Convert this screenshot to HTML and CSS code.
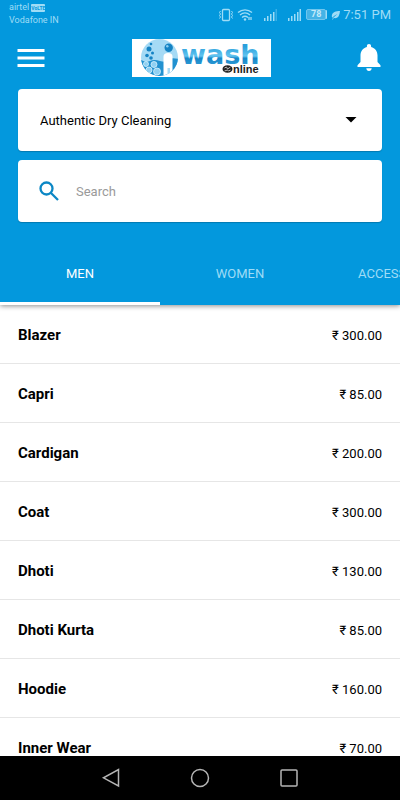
FILE: index.html
```html
<!DOCTYPE html>
<html lang="en">
<head>
<meta charset="utf-8">
<meta name="viewport" content="width=device-width, initial-scale=1">
<title>iWash Online</title>
<link rel="stylesheet" href="styles.css">
</head>
<body>
<div class="app">
  <header class="top">
    <div class="status">
      <div class="carriers">
        <div class="carrier">airtel <span class="volte">VoLTE</span></div>
        <div class="carrier">Vodafone IN</div>
      </div>
      <div class="indicators">
        <svg width="16" height="14" viewBox="0 0 16 14" fill="none" stroke="currentColor" aria-hidden="true">
          <rect x="4.5" y="1.5" width="7" height="11" rx="1" stroke-width="1.3"/>
          <path d="M2.500 3l-1 1.500 1 1.500-1 1.500 1 1.500-1 1.500M13.500 3l1 1.500-1 1.500 1 1.500-1 1.500 1 1.500"/>
        </svg>
        <svg class="wifi" width="16" height="14" viewBox="0 0 16 14" fill="none" stroke="currentColor" stroke-width="1.3" aria-hidden="true">
          <path d="M1 4.500c4-3.600 10-3.600 14 0M3 7c3-2.600 7-2.600 10 0M5 9.400c2-1.500 4-1.500 6 0"/>
          <circle cx="8" cy="11.500" r="1.200" fill="currentColor" stroke="none"/>
          <path d="M12 12V9M14 9v3"/>
        </svg>
        <svg class="signal" width="14" height="14" viewBox="0 0 14 14" fill="currentColor" aria-hidden="true">
          <path d="M1 10h1.500v3H1zM4 8h1.500v5H4zM7 6h1.500v7H7zM10 4h1.500v9H10z"/>
          <path d="M12.500 1H14v12h-1.500z" opacity=".35"/>
        </svg>
        <svg class="signal" width="14" height="14" viewBox="0 0 14 14" fill="currentColor" aria-hidden="true">
          <path d="M1 10h1.500v3H1zM4 8h1.500v5H4zM7 6h1.500v7H7zM10 4h1.500v9H10zM12.500 1H14v12h-1.500z"/>
        </svg>
        <span class="battery">78</span>
        <svg class="leaf" width="9" height="10" viewBox="0 0 9 10" fill="currentColor" aria-hidden="true">
          <path d="M9 1C5 1 1 2 .8 6c0 .7.200 1.200.5 1.700C3 6 4.500 5 6.500 4 4.500 5.600 2.500 7 1 9.500h.8l1-1.400C7.500 9 8.500 5 9 1z"/>
        </svg>
        <time class="clock">7:51 PM</time>
      </div>
    </div>

    <div class="bar">
      <button class="icon-button" type="button" aria-label="Menu">
        <svg width="28" height="18" viewBox="0 0 28 18" fill="#fff"><path d="M.5 0h27v3H.5zM.5 7.500h27v3H.5zM.5 15h27v3H.5z"/></svg>
      </button>
      <svg class="logo" width="139" height="38" viewBox="0 0 139 38" role="img" aria-label="iWash Online">
        <defs>
          <linearGradient id="ink" x1="0" y1="0" x2="0" y2="1">
            <stop offset=".25" stop-color="#2ba0dc"/><stop offset=".55" stop-color="#62c4f0"/>
            <stop offset=".62" stop-color="#1787c8"/><stop offset="1" stop-color="#3aa6de"/>
          </linearGradient>
          <clipPath id="disc"><circle cx="27.500" cy="18.500" r="18.500"/></clipPath>
        </defs>
        <rect width="139" height="38" fill="#fff"/>
        <g clip-path="url(#disc)">
          <rect x="9" width="38" height="38" fill="#a5daf5"/>
          <path d="M9 21q5 3 9 1t10 0 8-1 11-1v18H9z" fill="#2191d0"/>
          <g fill="#8fd0f2" stroke="#d8f1fc" stroke-width=".8">
            <circle cx="14" cy="25" r="2.500"/><circle cx="22" cy="25.500" r="3"/><circle cx="17" cy="31" r="3"/><circle cx="25" cy="32.500" r="3.500"/>
          </g>
          <path d="M31.500 38V17.500q0-3.500 4.500-3.500t4.500 3.500V38z" fill="#fff"/>
          <path d="M35.500 29h2.500v9h-2.500z" fill="#a5daf5"/>
        </g>
        <g fill="#1583c4">
          <circle cx="36.700" cy="8.700" r="4.200"/><circle cx="17" cy="10" r="2.500"/><circle cx="15" cy="16.500" r="1.800"/>
          <circle cx="19" cy="5" r="1.300"/><circle cx="20.500" cy="14" r="1.500"/><circle cx="19" cy="19" r="1.800"/>
        </g>
        <circle cx="35.300" cy="7.300" r="1.200" fill="#8fd0f2"/>
        <text class="logo-wash" x="49" y="25" fill="url(#ink)">wash</text>
        <ellipse cx="95.500" cy="30" rx="5" ry="3.800" fill="#222"/>
        <path d="M92.500 29l2-1 1 2 3-2M92.500 32l3-1 1 1 2-1" stroke="#bbb" fill="none"/>
        <text class="logo-online" x="101" y="34" fill="#222">nline</text>
      </svg>
      <button class="icon-button" type="button" aria-label="Notifications">
        <svg width="24" height="28" viewBox="0 0 24 28" fill="#fff"><path d="M12 0c1.300 0 2.100.9 2.100 2.200v.7c4 1 6.400 4.300 6.400 8.400V18l3 3.200V23H.5v-1.800l3-3.200v-6.700c0-4.100 2.400-7.400 6.400-8.400v-.7C9.900.9 10.700 0 12 0zM9.300 24.200h5.400c0 1.500-1.200 2.700-2.700 2.700s-2.700-1.200-2.700-2.700z"/></svg>
      </button>
    </div>

    <div class="filters">
      <div class="field">
        <select class="service" aria-label="Service">
          <option>Authentic Dry Cleaning</option>
        </select>
        <svg class="caret" width="12" height="6" viewBox="0 0 12 6" aria-hidden="true"><path d="M.5 0h11L6 5.500z"/></svg>
      </div>
      <label class="field">
        <svg class="lens" width="20" height="20" viewBox="0 0 20 20" fill="none" stroke="#0b87c5" stroke-width="2.300" aria-hidden="true"><circle cx="7.500" cy="7.500" r="6"/><path d="M12 12l7 7"/></svg>
        <input class="search" type="text" placeholder="Search" aria-label="Search">
      </label>
    </div>

    <nav class="tabs">
      <button class="tab active" type="button">MEN</button>
      <button class="tab" type="button">WOMEN</button>
      <button class="tab" type="button">ACCESSORIES</button>
    </nav>
  </header>

  <main class="content">
    <ul class="items">
      <li class="item"><span class="name">Blazer</span><span class="price">₹ 300.00</span></li>
      <li class="item"><span class="name">Capri</span><span class="price">₹ 85.00</span></li>
      <li class="item"><span class="name">Cardigan</span><span class="price">₹ 200.00</span></li>
      <li class="item"><span class="name">Coat</span><span class="price">₹ 300.00</span></li>
      <li class="item"><span class="name">Dhoti</span><span class="price">₹ 130.00</span></li>
      <li class="item"><span class="name">Dhoti Kurta</span><span class="price">₹ 85.00</span></li>
      <li class="item"><span class="name">Hoodie</span><span class="price">₹ 160.00</span></li>
      <li class="item"><span class="name">Inner Wear</span><span class="price">₹ 70.00</span></li>
    </ul>
  </main>

  <footer class="system">
    <button class="icon-button" type="button" aria-label="Back"><svg width="20" height="20" viewBox="0 0 20 20"><path d="M17.500 1.500v16.500L2.500 9.800z"/></svg></button>
    <button class="icon-button" type="button" aria-label="Home"><svg width="20" height="20" viewBox="0 0 20 20"><circle cx="10" cy="10" r="8.500"/></svg></button>
    <button class="icon-button" type="button" aria-label="Recent apps"><svg width="20" height="20" viewBox="0 0 20 20"><rect x="2" y="2" width="16" height="16" rx="1"/></svg></button>
  </footer>
</div>
</body>
</html>
```

FILE: styles.css
```css
* {
  box-sizing: border-box;
}

body {
  margin: 0;
  font-family: Roboto, "Noto Sans", sans-serif;
  color: #000;
  background: #fff;
}

button {
  border: 0;
  padding: 0;
  background: none;
  font: inherit;
  color: inherit;
}

svg {
  display: block;
}

.app {
  display: flex;
  flex-direction: column;
  height: 100vh;
}

.top {
  position: relative;
  background: #0398dd;
  box-shadow: 0 1px 5px rgba(0, 0, 0, 0.45);
}

.status {
  display: flex;
  justify-content: space-between;
  height: 28px;
  padding: 1px 9px 0;
  color: #9fdcf6;
}

.carrier {
  display: flex;
  align-items: center;
  gap: 2px;
  font-size: 9px;
  line-height: 13px;
}

.volte {
  border-radius: 1px;
  background: #9fdcf6;
  color: #0398dd;
  font-size: 5px;
  font-weight: 700;
  line-height: 8px;
}

.indicators {
  display: flex;
  align-items: center;
}

.wifi {
  margin-left: 3px;
}

.signal {
  margin-left: 10px;
}

.battery {
  width: 20px;
  margin: 0 5px 0 5px;
  border: 1px solid #6fc6ee;
  border-radius: 2px;
  background: #45b3e6;
  box-shadow: 2px 0 0 -1px #9fdcf6;
  color: #c4eafa;
  font-size: 9px;
  font-weight: 700;
  line-height: 9px;
  text-align: center;
}

.clock {
  margin-left: 3px;
  font-size: 13px;
}

.bar {
  display: flex;
  align-items: center;
  justify-content: space-between;
  height: 60px;
  padding: 0 19px 0 17px;
}

.logo-wash {
  font: 700 27px "DejaVu Sans", sans-serif;
}

.logo-online {
  font: 700 11px "Liberation Sans", sans-serif;
}

.filters {
  display: flex;
  flex-direction: column;
  gap: 9px;
  padding: 1px 18px 19px;
}

.field {
  position: relative;
  display: flex;
  align-items: center;
  height: 62px;
  border-radius: 4px;
  background: #fff;
  box-shadow: 0 1px 1px rgba(0, 0, 0, 0.2);
}

.service,
.search {
  flex: 1;
  min-width: 0;
  height: 100%;
  border: 0;
  outline: 0;
  background: none;
  color: #000;
  font: 13px Roboto, sans-serif;
}

.service {
  padding: 0 22px;
  appearance: none;
}

.caret {
  position: absolute;
  right: 25px;
  pointer-events: none;
}

.lens {
  margin-left: 21px;
}

.search {
  padding: 0 17px;
}

.search::placeholder {
  color: #9a9a9a;
}

.tabs {
  display: flex;
  height: 64px;
  overflow: hidden;
}

.tab {
  flex: 0 0 40%;
  border: solid transparent;
  border-width: 3px 0;
  color: #9fdcf6;
  font-size: 13px;
}

.tab.active {
  border-bottom-color: #fff;
  color: #fff;
}

.content {
  flex: 1;
  min-height: 0;
  overflow: hidden;
}

.items {
  margin: 0;
  padding: 0;
  list-style: none;
}

.item {
  display: flex;
  align-items: center;
  justify-content: space-between;
  height: 59px;
  padding: 2px 18px 0;
  border-bottom: 1px solid #e6e6e6;
}

.name {
  font-size: 15px;
  font-weight: 700;
}

.price {
  font-size: 13px;
}

.system {
  display: flex;
  align-items: center;
  justify-content: center;
  gap: 69px;
  height: 44px;
  background: #000;
}

.system svg {
  fill: none;
  stroke: #b5b5b5;
  stroke-width: 1.5;
}
```
